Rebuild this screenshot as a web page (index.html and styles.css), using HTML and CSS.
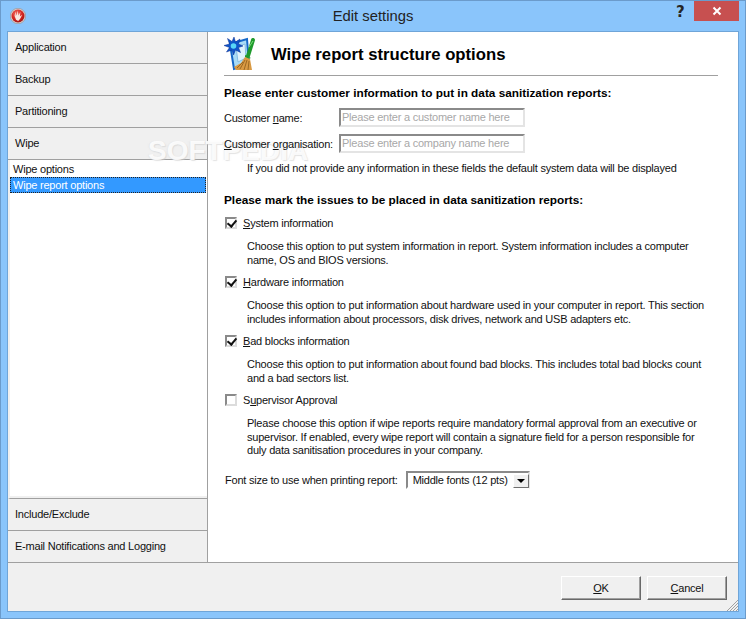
FILE: index.html
```html
<!DOCTYPE html>
<html lang="en">
<head>
<meta charset="utf-8">
<title>Edit settings</title>
<link rel="stylesheet" href="styles.css">
</head>
<body>
<div class="window">
  <header class="titlebar">
    <svg class="app-icon" width="16" height="16" viewBox="0 0 16 16">
      <defs>
        <radialGradient id="ball" cx=".4" cy=".3" r=".8">
          <stop offset="0" stop-color="#f0645a"/>
          <stop offset=".6" stop-color="#d0221e"/>
          <stop offset="1" stop-color="#8e1010"/>
        </radialGradient>
      </defs>
      <circle cx="8" cy="8" r="7.700" fill="#d8d0ce" stroke="#8b7f7c" stroke-width=".5"/>
      <circle cx="8" cy="8" r="6.500" fill="url(#ball)"/>
      <path d="M3.500 5 5.200 8.200 5.300 3.500 6.700 7.500 7.700 2.800 8.600 7.500 10.300 3.800 9.900 8.500 12.300 6.800 10 11 8.200 13 6 11.800Z" fill="#f8e8e2"/>
    </svg>
    <span class="title">Edit settings</span>
    <span class="help">?</span>
    <span class="close">
      <svg width="10" height="10" viewBox="0 0 10 10"><path d="M1.500 1.500 8.500 8.500M8.500 1.500 1.500 8.500" stroke="#fff" stroke-width="2"/></svg>
    </span>
  </header>
  <div class="client">
    <div class="main">
      <nav class="side">
        <div class="tab">Application</div>
        <div class="tab">Backup</div>
        <div class="tab">Partitioning</div>
        <div class="tab">Wipe</div>
        <ul class="list">
          <li>Wipe options</li>
          <li class="selected">Wipe report options</li>
        </ul>
        <div class="tab">Include/Exclude</div>
        <div class="tab">E-mail Notifications and Logging</div>
      </nav>
      <section class="content">
        <div class="head">
          <svg class="head-icon" width="34" height="34" viewBox="0 0 34 34">
            <path d="M6 7 23 2 25 27 10 32Z" fill="#a9dcf6" stroke="#1668c8" stroke-width="2"/>
            <path d="M12 10 21 7 22 21 14 25Z" fill="#dff3fc" stroke="#86bde4"/>
            <path d="M24 19 29 3" stroke="#1e9a2c" stroke-width="4" stroke-linecap="round"/>
            <path d="M25 10 29 4" stroke="#7ede7a" stroke-width="1"/>
            <path d="M21 18 27 21 24 22 21 20Z" fill="#1e9a2c"/>
            <path d="M21 20 26 22 28 33 12 33 10 30 17 26Z" fill="#d99a44"/>
            <path d="M21 23 16 32M23 23 20 33M25 24 24 33M19 25 13 31" stroke="#94621e" stroke-width=".9"/>
            <path d="M10 0 11.500 5 16 2 14.500 7 19 9 14.500 10.500 16.500 15.500 11.500 13 9.500 18 8 13 2.500 15 5.500 10.500 0 8.500 5.500 7 3.500 1.500 8 4.500Z" fill="#0f55c8" stroke="#0a2f90" stroke-width=".5"/>
            <circle cx="9.500" cy="9" r="2.800" fill="#58d6f7"/>
          </svg>
          <h1>Wipe report structure options</h1>
        </div>
        <h2 class="first">Please enter customer information to put in data sanitization reports:</h2>
        <div class="field">
          <label>Customer <u>n</u>ame:</label>
          <span class="input">Please enter a customer name here</span>
        </div>
        <div class="field">
          <label><u>C</u>ustomer <u>o</u>rganisation:</label>
          <span class="input">Please enter a company name here</span>
        </div>
        <p class="note">If you did not provide any information in these fields the default system data will be displayed</p>
        <h2 class="second">Please mark the issues to be placed in data sanitization reports:</h2>

        <div class="check"><span class="box on"></span><span><u>S</u>ystem information</span></div>
        <p class="desc">Choose this option to put system information in report. System information includes a computer name, OS and BIOS versions.</p>
        <div class="check"><span class="box on"></span><span><u>H</u>ardware information</span></div>
        <p class="desc">Choose this option to put information about hardware used in your computer in report. This section includes information about processors, disk drives, network and USB adapters etc.</p>
        <div class="check"><span class="box on"></span><span><u>B</u>ad blocks information</span></div>
        <p class="desc">Choose this option to put information about found bad blocks. This includes total bad blocks count and a bad sectors list.</p>
        <div class="check"><span class="box"></span><span>S<u>u</u>pervisor Approval</span></div>
        <p class="desc">Please choose this option if wipe reports require mandatory formal approval from an executive or supervisor. If enabled, every wipe report will contain a signature field for a person responsible for duly data sanitisation procedures in your company.</p>

        <div class="font-row">
          <span>Font size to use when printing report:</span>
          <span class="select">Middle fonts (12 pts)<span class="arrow"></span></span>
        </div>
      </section>
    </div>
    <footer class="footer">
      <button class="btn"><u>O</u>K</button>
      <button class="btn"><u>C</u>ancel</button>
      <svg class="grip" width="12" height="12" viewBox="0 0 12 12"><path d="M12 1 1 12M12 4 4 12M12 7 7 12M12 10 10 12" stroke="#a0a0a0"/></svg>
    </footer>
  </div>
  <div class="watermark">SOFTPEDIA</div>
</div>
</body>
</html>
```

FILE: styles.css
```css
* { box-sizing: border-box; }
html, body { margin: 0; padding: 0; }
body {
  width: 746px;
  height: 619px;
  font-family: "Liberation Sans", Arial, sans-serif;
  font-size: 11px;
  letter-spacing: -.22px;
  color: #111;
  overflow: hidden;
}
.window {
  position: relative;
  width: 746px;
  height: 619px;
  background: #8ac5fb;
  border: 1px solid #6b9bcb;
  display: flex;
  flex-direction: column;
  padding: 0 6px 6px;
}
.titlebar {
  position: relative;
  height: 30px;
  flex: none;
  text-align: center;
  line-height: 30px;
  font-size: 14.8px;
  letter-spacing: 0;
  color: #222;
}
.title { display: block; }
.app-icon { position: absolute; left: 3px; top: 7px; }
.help {
  position: absolute;
  left: 669px;
  top: -4px;
  font: bold 15px/30px "DejaVu Sans", sans-serif;
  color: #262626;
}
.close {
  position: absolute;
  left: 687px;
  top: 0;
  width: 45px;
  height: 20px;
  background: #c75050;
  display: flex;
  align-items: center;
  justify-content: center;
}
.client {
  flex: 1;
  display: flex;
  flex-direction: column;
  border: 1px solid #6fa5d8;
  min-height: 0;
}
.main { flex: 1; display: flex; min-height: 0; background: #fff; border-bottom: 1px solid #a0a0a0; }
.side {
  width: 200px;
  flex: none;
  display: flex;
  flex-direction: column;
  border-right: 1px solid #a0a0a0;
  background: #f0f0f0;
}
.tab {
  height: 32px;
  flex: none;
  padding-left: 7px;
  line-height: 30px;
  background: #f0f0f0;
  border-bottom: 1px solid #a0a0a0;
}
.tab:last-child { border-bottom: 0; height: 31px; }
.list {
  flex: 1;
  list-style: none;
  margin: 0;
  padding: 2px 0;
  background: #fff;
  border-left: 2px solid #f0f0f0;
  border-bottom: 1px solid #a0a0a0;
  box-shadow: inset 0 -2px 0 #f0f0f0;
}
.list li { height: 15px; line-height: 15px; padding-left: 3px; }
.list .selected {
  height: 16px;
  line-height: 16px;
  background: #3399ff;
  color: #fff;
  outline: 1px dotted #222;
  outline-offset: -1px;
  width: 196px;
}
.content { flex: 1; min-width: 0; padding: 5px 20px 0 16px; position: relative; z-index: 1; }
.head {
  display: flex;
  align-items: center;
  height: 39px;
  border-bottom: 1px solid #a0a0a0;
  padding-bottom: 2px;
}
.head-icon { flex: none; margin-right: 13px; margin-top: -2px; }
h1 { margin: 0; font-size: 16.7px; font-weight: bold; color: #000; line-height: 22px; letter-spacing: 0; }
h2 { margin: 0; font-size: 11.8px; font-weight: bold; color: #000; line-height: 14px; letter-spacing: 0; }
.first { margin-top: 10px; }
.second { margin-top: 18px; }
.field { display: flex; align-items: center; height: 19px; margin-top: 7px; }
.first + .field { margin-top: 8px; }
.field label { width: 115px; flex: none; }
.input {
  width: 186px;
  height: 19px;
  border: 2px solid;
  border-color: #8a8a8a #e4e4e4 #e4e4e4 #8a8a8a;
  background: #fff;
  color: #a8a8a8;
  padding-left: 1px;
  line-height: 15px;
  white-space: nowrap;
  overflow: hidden;
}
.note { margin: 8px 0 0 23px; line-height: 14px; white-space: nowrap; }
.check { display: flex; align-items: center; gap: 6px; height: 14px; margin-top: 8px; padding-left: 1px; }
.second + .check { margin-top: 9px; }
.box {
  width: 12px;
  height: 12px;
  flex: none;
  border: 2px solid;
  border-color: #8a8a8a #dcdcdc #dcdcdc #8a8a8a;
  background: #fff;
  position: relative;
}
.box.on::after {
  content: "";
  position: absolute;
  left: 2px;
  top: -1px;
  width: 4px;
  height: 7px;
  border: solid #111;
  border-width: 0 2px 2px 0;
  transform: rotate(40deg);
}
.desc { margin: 10px 0 0 23px; line-height: 13.5px; width: 460px; }
.font-row { display: flex; align-items: center; gap: 8px; height: 18px; margin-top: 13px; padding-left: 1px; }
.select {
  width: 124px;
  height: 18px;
  border: 2px solid;
  border-color: #8a8a8a #e4e4e4 #fff #8a8a8a;
  padding-left: 5px;
  line-height: 14px;
  position: relative;
  white-space: nowrap;
}
.arrow {
  position: absolute;
  right: -1px;
  top: 1px;
  width: 16px;
  height: 14px;
  background: #f0f0f0;
  border: 1px solid;
  border-color: #fff #707070 #707070 #fff;
}
.arrow::after {
  content: "";
  position: absolute;
  left: 3px;
  top: 4px;
  border: 4px solid transparent;
  border-top: 4px solid #000;
  border-bottom: 0;
}
.footer {
  height: 48px;
  flex: none;
  background: #f0f0f0;
  position: relative;
  display: flex;
  justify-content: flex-end;
  gap: 6px;
  padding: 13px 11px 0 0;
}
.btn {
  width: 80px;
  height: 24px;
  background: #f0f0f0;
  border: 1px solid;
  border-color: #fff #696969 #696969 #fff;
  font: inherit;
  letter-spacing: inherit;
  color: #111;
  padding: 0;
  box-shadow: inset -1px -1px 0 #a0a0a0;
}
.grip { position: absolute; right: 0; bottom: 0; }
.watermark {
  position: absolute;
  left: 147px;
  top: 134px;
  font: bold 28px/32px "Liberation Sans", sans-serif;
  letter-spacing: 0;
  color: rgba(255, 255, 255, .85);
  text-shadow: 1px 1px 1px rgba(205, 205, 205, .55), -1px 0 1px rgba(225, 225, 225, .5);
  pointer-events: none;
}
```
